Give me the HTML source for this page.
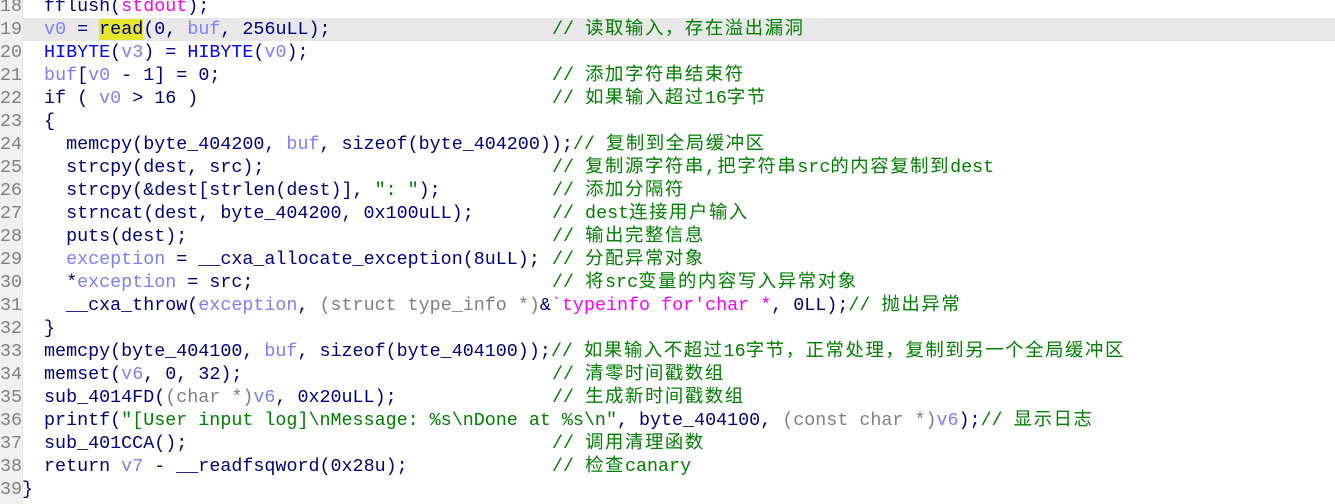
<!DOCTYPE html>
<html><head><meta charset="utf-8"><style>
body{margin:0;width:1335px;height:504px;overflow:hidden;background:#fff;position:relative}
#g{position:absolute;left:0;top:0;width:22px;height:504px;background:#f0f0f0;border-right:1px solid #e4e4e4}
.hl{position:absolute;left:22px;right:0;top:18px;height:23px;background:#e8e8e8}
pre{margin:0;position:absolute;top:-5px;font-family:"Liberation Mono","Noto Sans CJK SC",monospace;font-size:18.37px;line-height:23px;color:#000080}
#n{left:-8px;width:30px;text-align:right;color:#808080;overflow:hidden}
#c{left:22px;width:1313px}
#c div{position:relative;height:23px;white-space:pre}
.a{position:absolute;left:530px;top:0}
.k{letter-spacing:1.6px}
.v{color:#7f7fff}.m{color:#0000ff}.c{color:#008000}.s{color:#008000}.i{color:#ff00ff}.t{color:#808080}.y{background:#e6e62e}
</style></head><body>
<div id="g"></div><div class="hl"></div>
<pre id="n">18
19
20
21
22
23
24
25
26
27
28
29
30
31
32
33
34
35
36
37
38
39</pre>
<pre id="c"><div>  fflush(<span class="i">stdout</span>);</div><div>  <span class="v">v0</span> = <span class="y">read</span>(0, <span class="v">buf</span>, 256uLL);<span class="a c">// <span class="k">读取输入，存在溢出漏洞</span></span></div><div>  <span class="m">HIBYTE</span>(<span class="v">v3</span>) = <span class="m">HIBYTE</span>(<span class="v">v0</span>);</div><div>  <span class="v">buf</span>[<span class="v">v0</span> - 1] = 0;<span class="a c">// <span class="k">添加字符串结束符</span></span></div><div>  if ( <span class="v">v0</span> &gt; 16 )<span class="a c">// <span class="k">如果输入超过</span>16<span class="k">字节</span></span></div><div>  {</div><div>    memcpy(byte_404200, <span class="v">buf</span>, sizeof(byte_404200));<span class="c">// <span class="k">复制到全局缓冲区</span></span></div><div>    strcpy(dest, src);<span class="a c">// <span class="k">复制源字符串,把字符串</span>src<span class="k">的内容复制到</span>dest</span></div><div>    strcpy(&amp;dest[strlen(dest)], <span class="s">": "</span>);<span class="a c">// <span class="k">添加分隔符</span></span></div><div>    strncat(dest, byte_404200, 0x100uLL);<span class="a c">// dest<span class="k">连接用户输入</span></span></div><div>    puts(dest);<span class="a c">// <span class="k">输出完整信息</span></span></div><div>    <span class="v">exception</span> = __cxa_allocate_exception(8uLL);<span class="a c">// <span class="k">分配异常对象</span></span></div><div>    *<span class="v">exception</span> = src;<span class="a c">// <span class="k">将</span>src<span class="k">变量的内容写入异常对象</span></span></div><div>    __cxa_throw(<span class="v">exception</span>, <span class="t">(struct type_info *)</span>&amp;<span class="i">`typeinfo for'char *</span>, 0LL);<span class="c">// <span class="k">抛出异常</span></span></div><div>  }</div><div>  memcpy(byte_404100, <span class="v">buf</span>, sizeof(byte_404100));<span class="c">// <span class="k">如果输入不超过</span>16<span class="k">字节，正常处理，复制到另一个全局缓冲区</span></span></div><div>  memset(<span class="v">v6</span>, 0, 32);<span class="a c">// <span class="k">清零时间戳数组</span></span></div><div>  sub_4014FD(<span class="t">(char *)</span><span class="v">v6</span>, 0x20uLL);<span class="a c">// <span class="k">生成新时间戳数组</span></span></div><div>  printf(<span class="s">"[User input log]\nMessage: %s\nDone at %s\n"</span>, byte_404100, <span class="t">(const char *)</span><span class="v">v6</span>);<span class="c">// <span class="k">显示日志</span></span></div><div>  sub_401CCA();<span class="a c">// <span class="k">调用清理函数</span></span></div><div>  return <span class="v">v7</span> - __readfsqword(0x28u);<span class="a c">// <span class="k">检查</span>canary</span></div><div>}</div></pre>
</body></html>
